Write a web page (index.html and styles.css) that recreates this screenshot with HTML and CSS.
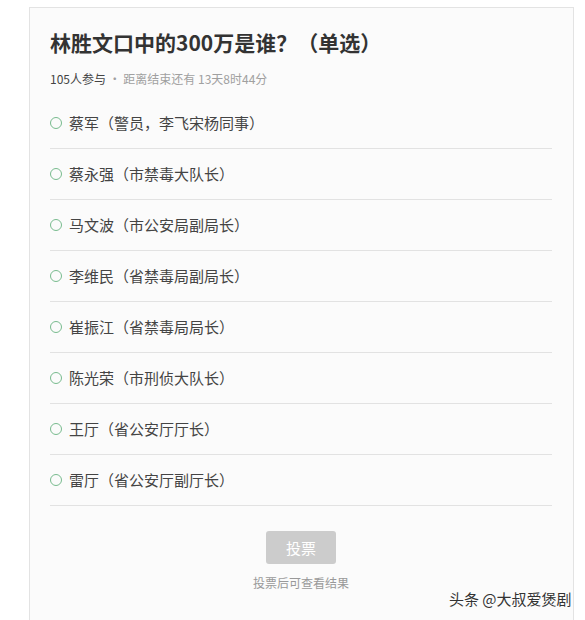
FILE: index.html
```html
<!DOCTYPE html>
<html lang="zh-CN">
<head>
    <meta charset="UTF-8">
    <meta name="viewport" content="width=device-width, initial-scale=1.0">
    <title>投票</title>
    <link rel="stylesheet" href="styles.css">
</head>
<body>
    <div class="card">
        <h1 class="title">林胜文口中的300万是谁？（单选）</h1>
        <p class="meta"><span class="count">105人参与</span> · 距离结束还有 13天8时44分</p>
        <ul class="options">
            <li class="option"><span class="radio"></span>蔡军（警员，李飞宋杨同事）</li>
            <li class="option"><span class="radio"></span>蔡永强（市禁毒大队长）</li>
            <li class="option"><span class="radio"></span>马文波（市公安局副局长）</li>
            <li class="option"><span class="radio"></span>李维民（省禁毒局副局长）</li>
            <li class="option"><span class="radio"></span>崔振江（省禁毒局局长）</li>
            <li class="option"><span class="radio"></span>陈光荣（市刑侦大队长）</li>
            <li class="option"><span class="radio"></span>王厅（省公安厅厅长）</li>
            <li class="option"><span class="radio"></span>雷厅（省公安厅副厅长）</li>
        </ul>
        <div class="vote">
            <button class="vote-btn" disabled>投票</button>
            <p class="hint">投票后可查看结果</p>
        </div>
    </div>
    <div class="watermark">头条 @大叔爱煲剧</div>
</body>
</html>
```

FILE: styles.css
```css
body {
    margin: 0;
    background-color: #fff;
    font-family: "Noto Sans CJK SC", "Liberation Sans", sans-serif;
    color: #333;
    overflow: hidden;
}
.card {
    box-sizing: border-box;
    width: 545px;
    min-height: 640px;
    margin: 7px 0 0 29px;
    padding: 19px 21px 0 20px;
    background-color: #fbfbfb;
    border: 1px solid #e3e3e3;
}
.title {
    margin: 0;
    font-size: 21px;
    line-height: 30px;
    font-weight: bold;
    color: #333;
}
.meta {
    margin: 12px 0 9px;
    font-size: 12px;
    line-height: 20px;
    color: #a0a0a0;
}
.count {
    color: #444;
}
.options {
    list-style: none;
    margin: 0;
    padding: 0;
}
.option {
    display: flex;
    align-items: center;
    height: 48px;
    padding-bottom: 2px;
    border-bottom: 1px solid #e2e2e2;
    font-size: 15px;
    color: #444;
}
.radio {
    box-sizing: border-box;
    width: 12px;
    height: 12px;
    margin: 2px 7px 0 0;
    border: 1px solid #78bb8e;
    border-radius: 50%;
}
.vote {
    display: flex;
    flex-direction: column;
    align-items: center;
    padding-top: 25px;
}
.vote-btn {
    width: 70px;
    height: 33px;
    border: none;
    border-radius: 3px;
    background-color: #cccccc;
    color: #fff;
    font-family: inherit;
    font-size: 15px;
}
.hint {
    margin: 10px 0 0;
    font-size: 12px;
    line-height: 18px;
    color: #999;
}
.watermark {
    position: absolute;
    left: 449px;
    top: 589px;
    font-size: 15px;
    line-height: 20px;
    color: #333;
    text-shadow: 0 0 2px #fff;
}
```
